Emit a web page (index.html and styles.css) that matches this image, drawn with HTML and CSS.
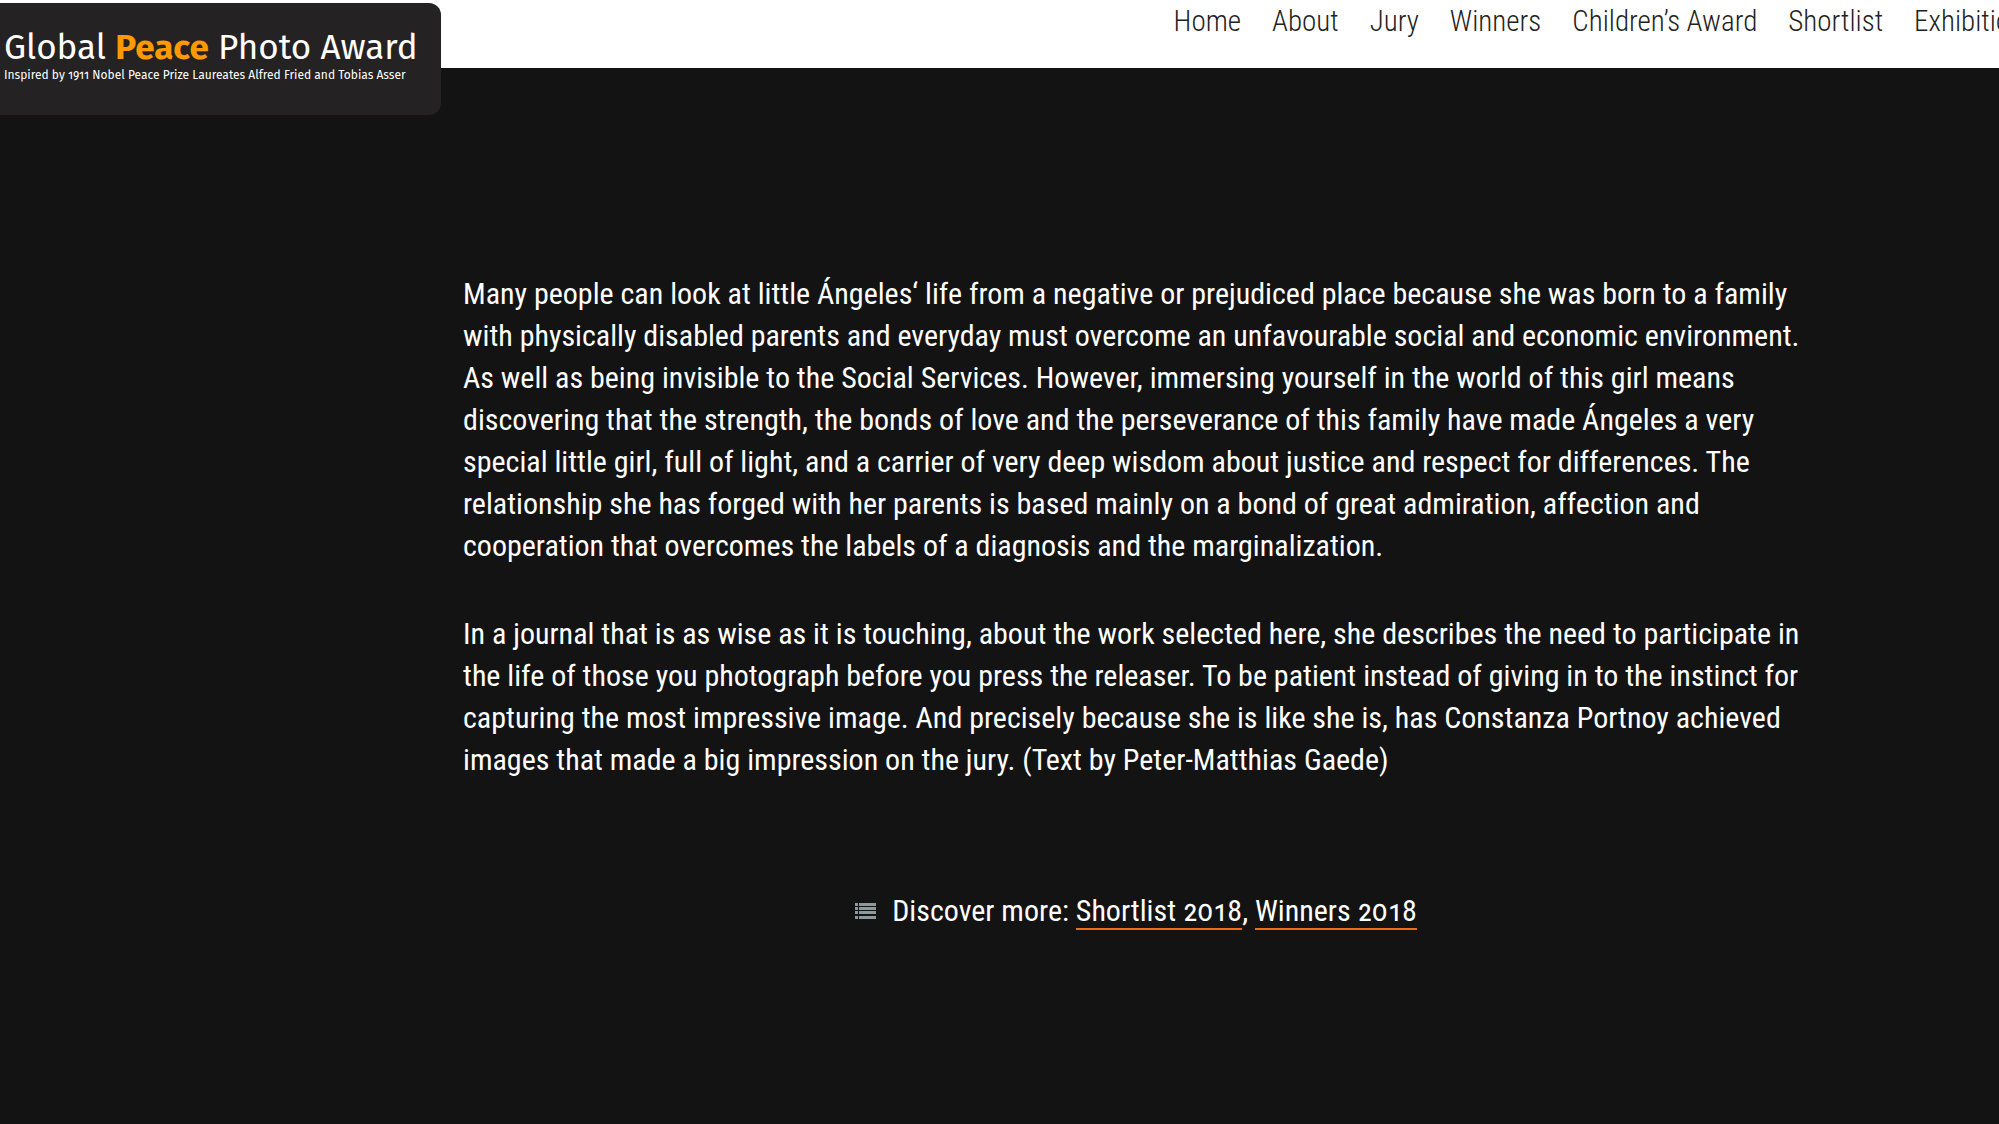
FILE: index.html
```html
<!DOCTYPE html>
<html lang="en">
<head>
    <meta charset="utf-8">
    <title>Global Peace Photo Award</title>
    <link rel="stylesheet" href="styles.css">
</head>
<body>
    <header class="header">
        <a class="logo" href="#">
            <span class="logo-name">Global <strong>Peace</strong> Photo Award</span>
            <span class="logo-tagline">Inspired by 1911 Nobel Peace Prize Laureates Alfred Fried and Tobias Asser</span>
        </a>
        <nav class="nav">
            <a href="#">Home</a>
            <a href="#">About</a>
            <a href="#">Jury</a>
            <a href="#">Winners</a>
            <a href="#">Children’s Award</a>
            <a href="#">Shortlist</a>
            <a href="#">Exhibitions</a>
        </nav>
    </header>

    <main class="content">
        <p>Many people can look at little Ángeles‘ life from a negative or prejudiced place because she was born to a family with physically disabled parents and everyday must overcome an unfavourable social and economic environment. As well as being invisible to the Social Services. However, immersing yourself in the world of this girl means discovering that the strength, the bonds of love and the perseverance of this family have made Ángeles a very special little girl, full of light, and a carrier of very deep wisdom about justice and respect for differences. The relationship she has forged with her parents is based mainly on a bond of great admiration, affection and cooperation that overcomes the labels of a diagnosis and the marginalization.</p>
        <p>In a journal that is as wise as it is touching, about the work selected here, she describes the need to participate in the life of those you photograph before you press the releaser. To be patient instead of giving in to the instinct for capturing the most impressive image. And precisely because she is like she is, has Constanza Portnoy achieved images that made a big impression on the jury. (Text by Peter-Matthias Gaede)</p>

        <div class="discover">
            <svg class="list-icon" viewBox="0 0 21 16" aria-hidden="true">
                <path d="M0 0h3v3H0zM0 4h3v3H0zM0 8h3v3H0zM0 13h3v3H0zM4 0h17v3H4zM4 4h17v3H4zM4 8h17v3H4zM4 13h17v3H4z"/>
            </svg>
            <span>Discover more: <a href="#">Shortlist 2018</a>, <a href="#">Winners 2018</a></span>
        </div>
    </main>
</body>
</html>
```
FILE: styles.css
```css
* {
    box-sizing: border-box;
}

body {
    margin: 0;
    background-color: #131313;
    color: #fff;
    font-family: "Roboto Condensed", "Open Sans Condensed", Roboto, sans-serif;
    font-size: 30px;
    line-height: 42px;
    font-variant-numeric: oldstyle-nums;
    overflow-x: hidden;
}

a {
    color: inherit;
    text-decoration: none;
}

.header {
    display: flex;
    justify-content: space-between;
    align-items: flex-start;
    height: 68px;
    padding-top: 3px;
    background-color: #fff;
}

.logo {
    display: flex;
    flex-direction: column;
    flex-shrink: 0;
    width: 441px;
    height: 112px;
    padding: 23px 0 0 4px;
    border-radius: 0 12px 12px 0;
    background-color: #242223;
    font-family: "Fira Sans", Roboto, sans-serif;
    white-space: nowrap;
}

.logo-name {
    font-size: 35px;
    line-height: 42px;
}

.logo-name strong {
    color: #f90;
    font-weight: 700;
}

.logo-tagline {
    font-size: 12px;
    line-height: 14px;
}

.nav {
    display: flex;
    gap: 31px;
    /* the last item runs off the right edge */
    margin-right: -38px;
    color: #222;
    font-size: 29px;
    line-height: 36px;
    font-weight: 300;
    white-space: nowrap;
}

.content {
    max-width: 1809px;
    padding: 205px 0 100px 463px;
}

.content p {
    margin: 0 0 46px;
}

.discover {
    display: flex;
    justify-content: center;
    align-items: center;
    gap: 16px;
    margin-top: 109px;
}

.discover a {
    border-bottom: 2px solid #ef6c14;
}

.list-icon {
    width: 21px;
    height: 16px;
    fill: #8d989d;
}
```
